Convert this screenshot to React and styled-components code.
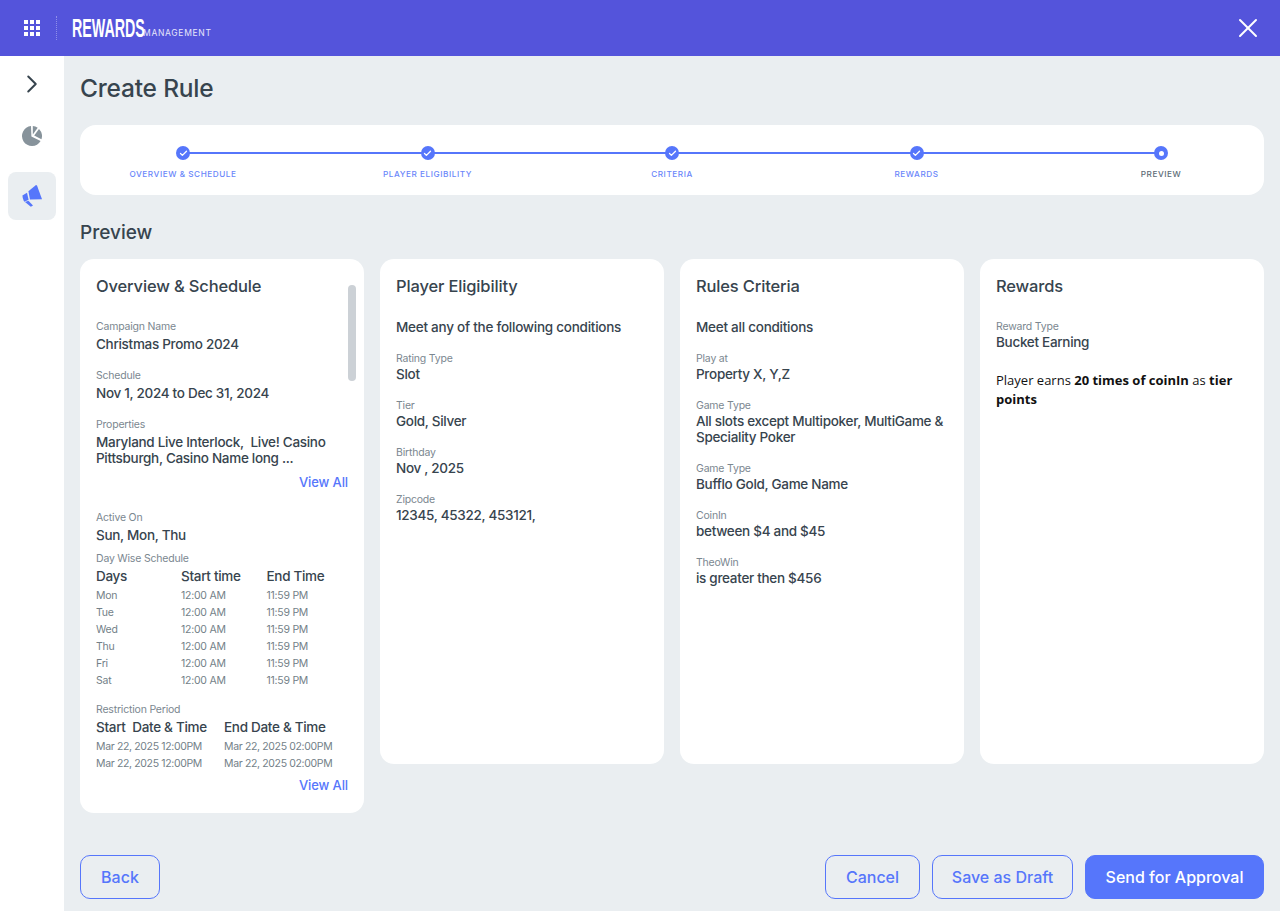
import styled, { createGlobalStyle } from 'styled-components'
import { ChevronRight, X, Check } from 'lucide-react'

const GlobalStyle = createGlobalStyle`
    html, body { margin: 0; padding: 0; }
    body {
        background: #eaeef1;
        font-family: "Inter", "Noto Sans", sans-serif;
        color: #37444e;
    }
    * { box-sizing: border-box; }
`

const Page = styled.div`
    width: 1280px;
    height: 911px;
    display: flex;
    flex-direction: column;
    overflow: hidden;
`
const TopBar = styled.header`
    height: 56px;
    flex: none;
    background: #5454db;
    display: flex;
    align-items: center;
    padding: 0 16px 0 24px;
    color: #fff;
`
const Divider = styled.span`
    height: 24px;
    margin: 0 15px 0 16px;
    border-left: 1px dotted #8f8fe8;
`
const Logo = styled.div`
    display: flex;
    align-items: flex-end;
    flex: 1;
    font-family: "Liberation Sans", sans-serif;
`
const LogoMain = styled.span`
    font-size: 25px;
    line-height: 20px;
    font-weight: 700;
    transform: scaleX(0.57);
    transform-origin: left;
    width: 71px;
    white-space: nowrap;
`
const LogoSub = styled.span`
    font-family: "Inter", sans-serif;
    font-size: 8.5px;
    line-height: 10px;
    letter-spacing: 0.7px;
    color: #e6e6fa;
`
const Body = styled.div`
    flex: 1;
    display: flex;
    min-height: 0;
`
const SideNav = styled.nav`
    width: 64px;
    flex: none;
    background: #fff;
    padding: 4px 8px;
    display: flex;
    flex-direction: column;
`
const NavItem = styled.div`
    width: 48px;
    height: 48px;
    margin-top: ${p => p.$top ?? 0}px;
    border-radius: 8px;
    display: flex;
    align-items: center;
    justify-content: center;
    background: ${p => (p.$active ? '#eaeef1' : 'transparent')};
    color: #37444e;
`
const Main = styled.main`
    flex: 1;
    padding: 16px 16px 12px;
    display: flex;
    flex-direction: column;
    min-width: 0;
`
const Title = styled.h1`
    margin: 0;
    font-size: 24.5px;
    line-height: 32px;
    font-weight: 500;
    letter-spacing: -0.2px;
`
const StepCard = styled.section`
    margin-top: 21px;
    height: 70px;
    background: #fff;
    border-radius: 16px;
    display: grid;
    grid-template-columns: repeat(5, 1fr);
    column-gap: 38.5px;
    padding-top: 21px;
`
const Step = styled.div`
    position: relative;
    display: flex;
    flex-direction: column;
    align-items: center;
    &:not(:last-child)::after {
        content: '';
        position: absolute;
        top: 6px;
        left: 50%;
        width: calc(100% + 38.5px);
        height: 2px;
        background: #5676fb;
    }
`
const Dot = styled.span`
    position: relative;
    z-index: 1;
    width: 14px;
    height: 14px;
    border-radius: 50%;
    background: #5676fb;
    color: #fff;
    display: flex;
    align-items: center;
    justify-content: center;
    &::before {
        content: '';
        display: ${p => (p.$current ? 'block' : 'none')};
        width: 5px;
        height: 5px;
        border-radius: 50%;
        background: #fff;
    }
`
const StepLabel = styled.span`
    margin-top: 8px;
    font-size: 8.2px;
    line-height: 12px;
    font-weight: 500;
    letter-spacing: 0.55px;
    text-transform: uppercase;
    color: ${p => (p.$current ? '#5c6b75' : '#6a86fa')};
`
const SectionTitle = styled.h2`
    margin: 25px 0 0;
    font-size: 19px;
    line-height: 26px;
    font-weight: 500;
`
const Cards = styled.div`
    margin-top: 13px;
    display: grid;
    grid-template-columns: repeat(4, 284px);
    column-gap: 16px;
    align-items: start;
`
const Card = styled.article`
    position: relative;
    height: ${p => (p.$tall ? '554px' : '505px')};
    background: #fff;
    border-radius: 14px;
    padding: 16px 16px 0;
`
const Thumb = styled.span`
    position: absolute;
    top: 26px;
    right: 8px;
    width: 8px;
    height: 96px;
    border-radius: 4px;
    background: #ccd1d6;
`
const CardTitle = styled.h3`
    margin: 0 0 23px;
    font-size: 16.5px;
    line-height: 22px;
    font-weight: 500;
    letter-spacing: -0.15px;
`
const Field = styled.div`
    margin-top: ${p => p.$gap ?? 17}px;
`
const Label = styled.div`
    font-size: 10.5px;
    line-height: 14px;
    letter-spacing: -0.2px;
    color: #7b8790;
`
const Value = styled.div`
    margin-top: ${p => p.$gap ?? 2}px;
    font-size: 13.5px;
    line-height: 16px;
    font-weight: 500;
    letter-spacing: -0.3px;
    color: #37444e;
`
const Condition = styled.div`
    font-size: 13.5px;
    line-height: 18px;
    font-weight: 500;
    letter-spacing: -0.25px;
    margin-top: -2px;
    margin-bottom: -1px;
`
const ViewAll = styled.div`
    margin: ${p => p.$top ?? 8}px 0 0;
    text-align: right;
    font-size: 13px;
    line-height: 16px;
    font-weight: 500;
    letter-spacing: -0.1px;
    color: #5676fb;
`
const Table = styled.div`
    display: grid;
    grid-template-columns: ${p => p.$cols};
    color: #737f88;
    font-size: 10.5px;
    line-height: 17px;
    letter-spacing: ${p => (p.$tight ? '-0.35px' : '-0.25px')};
    white-space: nowrap;
`
const HeadCell = styled.div`
    font-size: 13.5px;
    line-height: 21px;
    font-weight: 500;
    letter-spacing: -0.3px;
    color: #37444e;
    white-space: nowrap;
`
const PlainText = styled.p`
    margin: 21px 0 0;
    font-family: "Open Sans", sans-serif;
    font-size: 13px;
    line-height: 19px;
    color: #111;
    b { font-weight: 700; }
`
const Footer = styled.footer`
    margin-top: auto;
    display: flex;
    gap: 12px;
`
const Btn = styled.button`
    height: 44px;
    width: ${p => p.$w}px;
    border-radius: 10px;
    border: 1px solid #5676fb;
    background: ${p => (p.$primary ? '#5676fb' : 'transparent')};
    color: ${p => (p.$primary ? '#fff' : '#5676fb')};
    font: 500 16px "Inter", sans-serif;
    padding: 0;
    margin-left: ${p => (p.$push ? 'auto' : '0')};
`

const GridIcon = () => (
    <svg width="16" height="16" viewBox="0 0 16 16" fill="#fff">
        {[0, 6, 12].flatMap(y =>
            [0, 6, 12].map(x => <rect key={`${x}-${y}`} x={x} y={y} width="4" height="4" />)
        )}
    </svg>
)

const PieIcon = () => (
    <svg width="20" height="20" viewBox="0 0 20 20" fill="#87939b">
        <path d="M9 .05A10 10 0 1 0 18.6 15.1L9.4 10.6Z" />
        <path d="M10.8.03V8.6L15.7 1.8A10 10 0 0 0 10.8.03Z" />
        <path d="M17 3 12.2 9.6 19.4 13.3A10 10 0 0 0 17 3Z" />
    </svg>
)

const MegaphoneIcon = () => (
    <svg width="20" height="24" viewBox="0 0 20 24" fill="#5676fb">
        <path d="M6.4 7.2 14 1 15 1.6 20 15.2 8 15.4Z" />
        <path d="M.4 11.4 5 8.8 6.6 15.8 2.4 17.8C1.4 16.6.6 13.4.4 11.4Z" />
        <path d="M3 18 6.4 16.8 11 21.4 8.8 22.8Z" />
    </svg>
)

const steps = ['Overview & Schedule', 'Player Eligibility', 'Criteria', 'Rewards', 'Preview']
const days = ['Mon', 'Tue', 'Wed', 'Thu', 'Fri', 'Sat']

function InfoField({ label, value, gap, valueGap }) {
    return <Field $gap={gap}>
        <Label>{label}</Label>
        <Value $gap={valueGap}>{value}</Value>
    </Field>
}

export default function App() {
    return <Page>
        <GlobalStyle />
        <TopBar>
            <GridIcon />
            <Divider />
            <Logo>
                <LogoMain>REWARDS</LogoMain>
                <LogoSub>MANAGEMENT</LogoSub>
            </Logo>
            <X size={32} strokeWidth={1.5} />
        </TopBar>
        <Body>
            <SideNav>
                <NavItem><ChevronRight size={30} strokeWidth={1.6} /></NavItem>
                <NavItem $top={4}><PieIcon /></NavItem>
                <NavItem $top={12} $active><MegaphoneIcon /></NavItem>
            </SideNav>
            <Main>
                <Title>Create Rule</Title>
                <StepCard>
                    {steps.map((s, i) => {
                        let current = i === steps.length - 1
                        return <Step key={s}>
                            <Dot $current={current}>
                                {!current && <Check size={9} strokeWidth={3.5} />}
                            </Dot>
                            <StepLabel $current={current}>{s}</StepLabel>
                        </Step>
                    })}
                </StepCard>
                <SectionTitle>Preview</SectionTitle>
                <Cards>
                    <Card $tall>
                        <Thumb />
                        <CardTitle>Overview &amp; Schedule</CardTitle>
                        <InfoField gap={0} label="Campaign Name" value="Christmas Promo 2024" />
                        <InfoField label="Schedule" value="Nov 1, 2024 to Dec 31, 2024" />
                        <InfoField label="Properties" value={<>Maryland Live Interlock,&nbsp; Live! Casino<br />Pittsburgh, Casino Name long ...</>} />
                        <ViewAll>View All</ViewAll>
                        <InfoField gap={21} label="Active On" value="Sun, Mon, Thu" />
                        <Field $gap={9}>
                            <Label>Day Wise Schedule</Label>
                            <Table $cols="85px 85.5px 1fr">
                                <HeadCell>Days</HeadCell>
                                <HeadCell>Start time</HeadCell>
                                <HeadCell>End Time</HeadCell>
                                {days.flatMap(d => [
                                    <div key={d}>{d}</div>,
                                    <div key={d + 's'}>12:00 AM</div>,
                                    <div key={d + 'e'}>11:59 PM</div>,
                                ])}
                            </Table>
                        </Field>
                        <Field $gap={14}>
                            <Label>Restriction Period</Label>
                            <Table $cols="128px 1fr" $tight>
                                <HeadCell>Start &nbsp;Date &amp; Time</HeadCell>
                                <HeadCell>End Date &amp; Time</HeadCell>
                                <div>Mar 22, 2025 12:00PM</div>
                                <div>Mar 22, 2025 02:00PM</div>
                                <div>Mar 22, 2025 12:00PM</div>
                                <div>Mar 22, 2025 02:00PM</div>
                            </Table>
                        </Field>
                        <ViewAll $top={5}>View All</ViewAll>
                    </Card>
                    <Card>
                        <CardTitle>Player Eligibility</CardTitle>
                        <Condition>Meet any of the following conditions</Condition>
                        <InfoField valueGap={0} label="Rating Type" value="Slot" />
                        <InfoField valueGap={0} label="Tier" value="Gold, Silver" />
                        <InfoField valueGap={0} label="Birthday" value="Nov , 2025" />
                        <InfoField valueGap={0} label="Zipcode" value="12345, 45322, 453121," />
                    </Card>
                    <Card>
                        <CardTitle>Rules Criteria</CardTitle>
                        <Condition>Meet all conditions</Condition>
                        <InfoField valueGap={0} label="Play at" value="Property X, Y,Z" />
                        <InfoField valueGap={0} label="Game Type" value={<>All slots except Multipoker, MultiGame &amp;<br />Speciality Poker</>} />
                        <InfoField valueGap={0} label="Game Type" value="Bufflo Gold, Game Name" />
                        <InfoField valueGap={0} label="CoinIn" value="between $4 and $45" />
                        <InfoField valueGap={0} label="TheoWin" value="is greater then $456" />
                    </Card>
                    <Card>
                        <CardTitle>Rewards</CardTitle>
                        <InfoField gap={0} valueGap={0} label="Reward Type" value="Bucket Earning" />
                        <PlainText>Player earns <b>20 times of coinIn</b> as <b>tier points</b></PlainText>
                    </Card>
                </Cards>
                <Footer>
                    <Btn $w={80}>Back</Btn>
                    <Btn $w={95} $push>Cancel</Btn>
                    <Btn $w={141}>Save as Draft</Btn>
                    <Btn $w={179} $primary>Send for Approval</Btn>
                </Footer>
            </Main>
        </Body>
    </Page>
}
